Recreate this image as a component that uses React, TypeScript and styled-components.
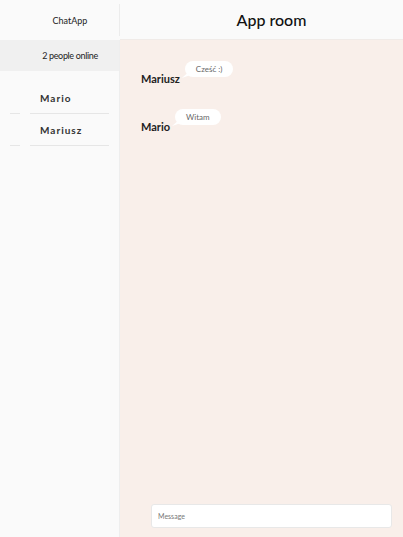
import React from "react";
import styled, { createGlobalStyle } from "styled-components";

const Global = createGlobalStyle`
  html, body { margin: 0; padding: 0; height: 100%; }
  body { font-family: Lato, "Noto Sans", sans-serif; color: #222; }
  #root { height: 100%; }
  * { box-sizing: border-box; }
`;

const Layout = styled.div`
  display: grid;
  grid-template-columns: 120px 1fr;
  height: 537px;
  width: 403px;
  overflow: hidden;
`;

const Sidebar = styled.aside`
  display: flex;
  flex-direction: column;
  background: #fafafa;
`;

const SideHeader = styled.div`
  position: relative;
  height: 40px;
  display: flex;
  align-items: center;
  justify-content: center;
  font-size: 9px;
  color: #222;
  padding-left: 20px;
  &::after {
    content: "";
    position: absolute;
    right: 0;
    top: 4px;
    bottom: 4px;
    width: 1px;
    background: #ececec;
  }
`;

const SideBody = styled.div`
  flex: 1;
  border-right: 1px solid #eeeeee;
  display: flex;
  flex-direction: column;
`;

const Online = styled.div`
  height: 31px;
  background: #f0f0f0;
  display: flex;
  align-items: center;
  justify-content: center;
  font-size: 9px;
  letter-spacing: -0.35px;
  color: #222;
  padding-left: 21px;
`;

const UserList = styled.ul`
  list-style: none;
  margin: 0;
  padding: 11px 10px 0;
`;

const UserItem = styled.li`
  display: grid;
  grid-template-columns: 10px 10px 1fr;
  grid-template-rows: 31px 1px;
`;

const UserName = styled.span`
  grid-column: 3;
  grid-row: 1;
  padding-left: 10px;
  padding-top: 1px;
  display: flex;
  align-items: center;
  font-size: 10px;
  font-weight: 700;
  letter-spacing: 1px;
  color: #333;
`;

const Rule = styled.span<{ $col: number }>`
  grid-column: ${(p) => p.$col};
  grid-row: 2;
  height: 1px;
  background: #e6e6e6;
`;

const Main = styled.main`
  display: flex;
  flex-direction: column;
  background: #f9efea;
`;

const MainHeader = styled.header`
  height: 40px;
  background: #fafafa;
  border-bottom: 1px solid #f0ebe8;
  display: flex;
  align-items: center;
  justify-content: center;
  font-size: 16px;
  font-weight: 500;
  color: #111;
  padding-left: 20px;
`;

const Messages = styled.div`
  flex: 1;
  display: flex;
  flex-direction: column;
  gap: 24px;
  padding: 21px 0 0 21px;
`;

const Message = styled.div`
  display: flex;
  align-items: flex-start;
`;

const Author = styled.span`
  font-size: 11px;
  font-weight: 700;
  color: #222;
  margin-top: 11px;
`;

const Bubble = styled.span<{ $offset: number }>`
  position: relative;
  margin-left: ${(p) => p.$offset}px;
  background: #ffffff;
  border-radius: 9px;
  height: 16px;
  padding: 0 11px;
  display: flex;
  align-items: center;
  font-size: 8px;
  color: #666;
  &::before {
    content: "";
    position: absolute;
    left: -3px;
    bottom: -1px;
    width: 8px;
    height: 7px;
    background: #ffffff;
    clip-path: polygon(0 100%, 100% 0, 100% 60%);
  }
`;

const Composer = styled.div`
  padding: 0 11px 9px 31px;
`;

const Input = styled.input`
  width: 100%;
  height: 24px;
  border: 1px solid #e8e8e8;
  border-radius: 3px;
  background: #fff;
  padding: 0 6px;
  font-family: Lato, "Noto Sans", sans-serif;
  font-size: 7px;
  outline: none;
  &::placeholder { color: #777; }
`;

const users = ["Mario", "Mariusz"];
const messages = [
  { author: "Mariusz", text: "Cześć :)", offset: 5 },
  { author: "Mario", text: "Witam", offset: 5 },
];

export default function App() {
  return (
    <>
      <Global />
      <Layout>
        <Sidebar>
          <SideHeader>ChatApp</SideHeader>
          <SideBody>
            <Online>2 people online</Online>
            <UserList>
              {users.map((u) => (
                <UserItem key={u}>
                  <UserName>{u}</UserName>
                  <Rule $col={1} />
                  <Rule $col={3} />
                </UserItem>
              ))}
            </UserList>
          </SideBody>
        </Sidebar>
        <Main>
          <MainHeader>App room</MainHeader>
          <Messages>
            {messages.map((m) => (
              <Message key={m.author}>
                <Author>{m.author}</Author>
                <Bubble $offset={m.offset}>{m.text}</Bubble>
              </Message>
            ))}
          </Messages>
          <Composer>
            <Input placeholder="Message" />
          </Composer>
        </Main>
      </Layout>
    </>
  );
}
